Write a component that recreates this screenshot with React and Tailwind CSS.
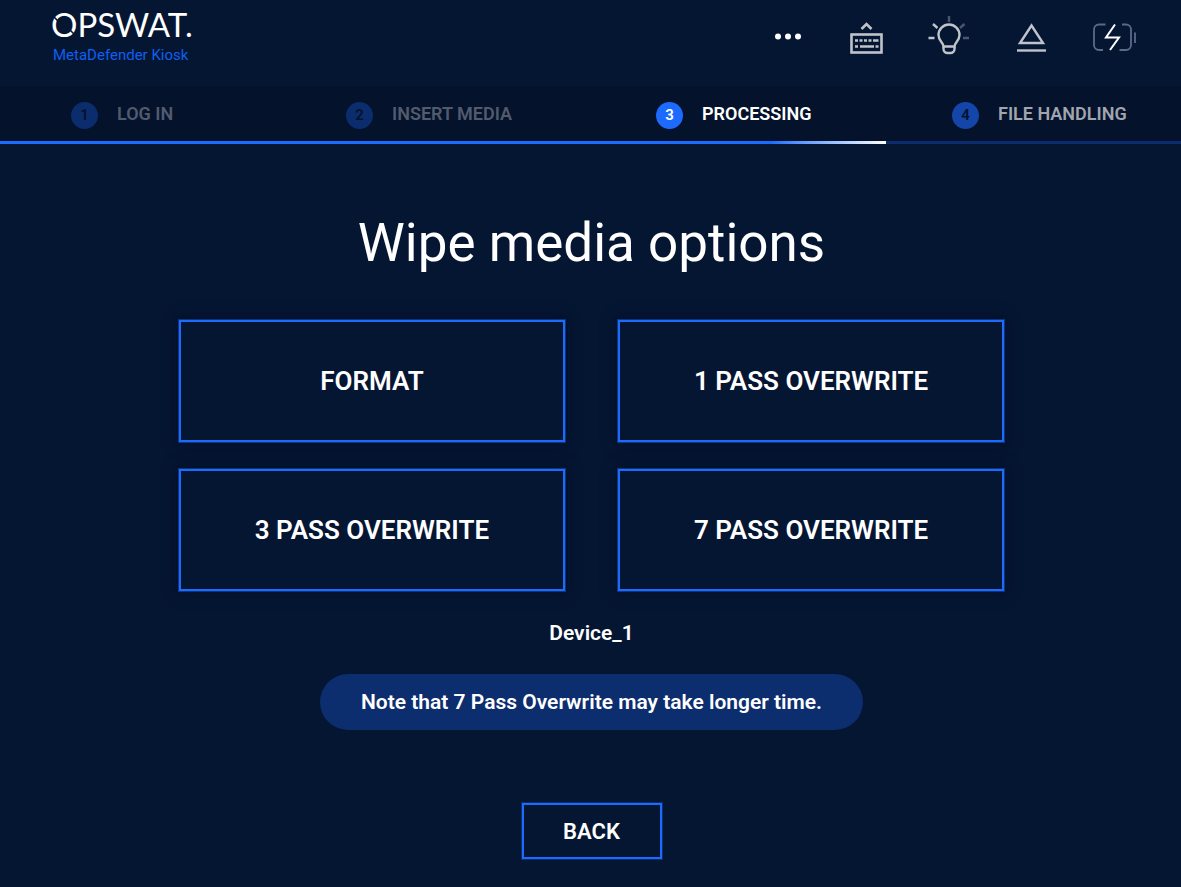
const steps = [
    { id: 1, label: "LOG IN", circle: "bg-[#0b2d6e] text-[#04122c]", text: "text-[#525b6d]" },
    { id: 2, label: "INSERT MEDIA", circle: "bg-[#0b2d6e] text-[#04122c]", text: "text-[#525b6d]" },
    { id: 3, label: "PROCESSING", circle: "bg-[#1d6bfe] text-white", text: "text-white" },
    { id: 4, label: "FILE HANDLING", circle: "bg-[#1346a8] text-[#04122c]", text: "text-[#a0a5ae]" },
];

const wipeOptions = ["FORMAT", "1 PASS OVERWRITE", "3 PASS OVERWRITE", "7 PASS OVERWRITE"];

function Logo() {
    return (
        <div className="ml-[50px] flex flex-col">
            <svg width="156" height="41" viewBox="0 0 156 41" role="img" aria-label="OPSWAT">
                <text x="1" y="33" fill="#fff" fontFamily="Lato, sans-serif" fontSize="33">OPSWAT.</text>
                {/* stencil cuts through the O */}
                <path d="M3 12l6 6M20 26l6 6" stroke="#051633" strokeWidth="1.5" />
            </svg>
            <span className="ml-[3px] text-[15px] leading-5 text-[#0f5ff0]">MetaDefender Kiosk</span>
        </div>
    );
}

function MoreIcon() {
    return (
        <svg width="32" height="50" viewBox="0 0 32 50" fill="#fff">
            <circle cx="6" cy="24.5" r="3" />
            <circle cx="16" cy="24.5" r="3" />
            <circle cx="26" cy="24.5" r="3" />
        </svg>
    );
}

function KeyboardIcon() {
    return (
        <svg width="36" height="50" viewBox="0 0 36 50" fill="none" stroke="#bfc3ca">
            <path d="M13.5 17l5-5 5 5" strokeWidth="2.6" />
            <rect x="3.5" y="22.5" width="30" height="18" strokeWidth="2.6" />
            <path d="M7 28.5h3M11.5 28.5h3M16 28.5h3M20.5 28.5h3M25 28.5h5.5M7 34.5h3M12 34.5h14M27.5 34.5h3" strokeWidth="2.6" />
        </svg>
    );
}

function LightIcon() {
    return (
        <svg width="42" height="50" viewBox="0 0 42 50" fill="none" stroke="#bfc3ca" strokeWidth="2.4">
            <path d="M15.5 34.5c0-4-5-5.5-5-11.5a10.5 10.5 0 0 1 21 0c0 6-5 7.5-5 11.5z" />
            <path d="M15.5 34.5v2.5a4 4 0 0 0 4 4h3a4 4 0 0 0 4-4v-2.5" />
            <path d="M0.5 26h6M5 12l4.5 4" />
            <path d="M21 4v6M36.5 12l-4.5 4M35 26h6" stroke="#4b566c" />
        </svg>
    );
}

function EjectIcon() {
    return (
        <svg width="34" height="50" viewBox="0 0 34 50" fill="none" stroke="#bfc3ca" strokeWidth="2.4">
            <path d="M17.5 13.5L29 31H6z" />
            <path d="M3 38.5h29" />
        </svg>
    );
}

function BatteryIcon() {
    return (
        <svg width="44" height="50" viewBox="0 0 44 50" fill="none" strokeWidth="1.8">
            <g stroke="#5b6a8b">
                <path d="M13.5 12.5H7a5 5 0 0 0-5 5v15.5a5 5 0 0 0 5 5h4" />
                <path d="M30 12.5h4a5 5 0 0 1 5 5v15.5a5 5 0 0 1-5 5h-6.5" />
                <path d="M43 20.5v10.5" />
            </g>
            <path d="M23 12.5l-9 13h13l-9 12.5" stroke="#fff" strokeWidth="2" />
        </svg>
    );
}

export default function App() {
    return (
        <div className="min-h-screen bg-[#051633] font-[Roboto,sans-serif] text-white">
            <header className="flex h-[86px] items-start justify-between pt-1 pr-[45px]">
                <Logo />
                <div className="flex gap-11 pt-2">
                    <button type="button" aria-label="More"><MoreIcon /></button>
                    <button type="button" aria-label="Keyboard"><KeyboardIcon /></button>
                    <button type="button" aria-label="Light"><LightIcon /></button>
                    <button type="button" aria-label="Eject"><EjectIcon /></button>
                    <button type="button" aria-label="Battery"><BatteryIcon /></button>
                </div>
            </header>

            <nav className="bg-[#04122c]">
                <ol className="grid h-[55px] grid-cols-[275fr_310fr_296fr_229fr] items-center pl-[71px]">
                    {steps.map((step) => (
                        <li key={step.id} className="flex items-center gap-[19px]">
                            <span className={`mt-1 flex size-[27px] items-center justify-center rounded-full text-[15px] font-semibold ${step.circle}`}>
                                {step.id}
                            </span>
                            <span className={`text-[18px] font-semibold ${step.text}`}>{step.label}</span>
                        </li>
                    ))}
                </ol>
                <div className="h-[3px] bg-[#0b2d6e]">
                    <div className="h-full w-3/4 bg-linear-to-r from-[#1d6bfe] from-87% to-white" />
                </div>
            </nav>

            <main className="flex flex-col items-center pl-0.5">
                <h1 className="mt-[67px] text-[53px] leading-16">Wipe media options</h1>

                <div className="mt-[45px] grid w-[70%] grid-cols-2 gap-x-[53px] gap-y-[27px]">
                    {wipeOptions.map((option) => (
                        <button
                            key={option}
                            type="button"
                            className="h-[122px] border-2 border-[#1d6bfe] text-[26px] font-semibold shadow-[0_0_12px_2px_#030f26] ring-1 ring-[#1d6bfe]/40"
                        >
                            {option}
                        </button>
                    ))}
                </div>

                <p className="mt-[30px] text-[21px] leading-6 font-semibold">Device_1</p>
                <p className="mt-[29px] rounded-full bg-[#0c2d6e] px-[41px] py-4 text-[21px] leading-6 font-semibold">
                    Note that 7 Pass Overwrite may take longer time.
                </p>

                <button
                    type="button"
                    className="mt-[73px] h-14 w-[140px] border-2 border-[#1d6bfe] text-[22px] font-semibold ring-1 ring-[#1d6bfe]/30"
                >
                    BACK
                </button>
            </main>
        </div>
    );
}
